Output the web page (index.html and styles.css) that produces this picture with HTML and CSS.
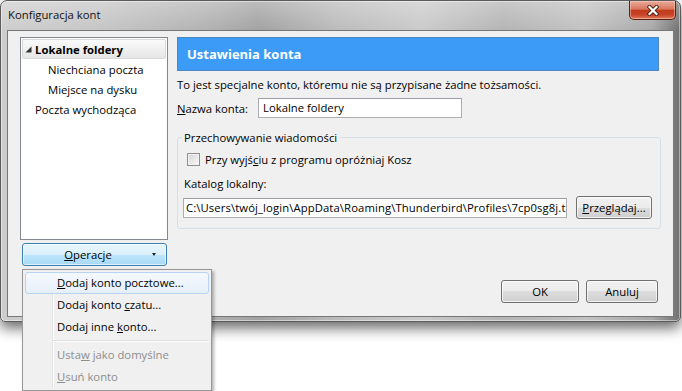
FILE: index.html
```html
<!DOCTYPE html>
<html lang="pl">
<head>
    <meta charset="UTF-8">
    <title>Konfiguracja kont</title>
    <link rel="stylesheet" href="styles.css">
</head>
<body>
    <div class="screen">
        <div class="window">
            <div class="titlebar">
                <span class="title">Konfiguracja kont</span>
                <div class="close-btn">
                    <svg width="12" height="11" viewBox="0 0 12 11">
                        <path d="M2.5 2 L9.5 9 M9.5 2 L2.5 9" stroke="#4a1b12" stroke-width="4" stroke-linecap="square"/>
                        <path d="M2.5 2 L9.5 9 M9.5 2 L2.5 9" stroke="#fff" stroke-width="2.2" stroke-linecap="square"/>
                    </svg>
                </div>
            </div>
            <div class="client">
                <div class="left-col">
                    <div class="tree">
                        <div class="tree-row selected">
                            <svg class="twisty" width="7" height="7" viewBox="0 0 7 7"><polygon points="6.5,0.5 6.5,6.5 0.5,6.5" fill="#333"/></svg>
                            <span>Lokalne foldery</span>
                        </div>
                        <div class="tree-row child">Niechciana poczta</div>
                        <div class="tree-row child">Miejsce na dysku</div>
                        <div class="tree-row top">Poczta wychodząca</div>
                    </div>
                    <button class="ops-btn">
                        <span class="ops-label"><u>O</u>peracje</span>
                        <span class="ops-arrow"></span>
                    </button>
                </div>
                <div class="right-col">
                    <div class="panel-head">Ustawienia konta</div>
                    <p class="note">To jest specjalne konto, któremu nie są przypisane żadne tożsamości.</p>
                    <div class="name-row">
                        <span class="name-label"><u>N</u>azwa konta:</span>
                        <div class="textbox name-box">Lokalne foldery</div>
                    </div>
                    <fieldset class="group">
                        <legend>Przechowywanie wiadomości</legend>
                        <div class="check-row">
                            <span class="checkbox"></span>
                            <span class="check-label">Przy wyjś<u>c</u>iu z programu opróżniaj Kosz</span>
                        </div>
                        <div class="dir-label">Katalog lokalny:</div>
                        <div class="dir-row">
                            <div class="textbox dir-box">C:\Users\twój_login\AppData\Roaming\Thunderbird\Profiles\7cp0sg8j.t</div>
                            <button class="btn browse-btn"><u>P</u>rzeglądaj...</button>
                        </div>
                    </fieldset>
                    <div class="actions">
                        <button class="btn ok-btn">OK</button>
                        <button class="btn cancel-btn">Anuluj</button>
                    </div>
                </div>
            </div>
        </div>

        <div class="menu">
            <div class="menu-item hover"><u>D</u>odaj konto pocztowe...</div>
            <div class="menu-item">Dodaj konto <u>c</u>zatu...</div>
            <div class="menu-item">Dodaj inne <u>k</u>onto...</div>
            <div class="menu-sep"></div>
            <div class="menu-item disabled">Usta<u>w</u> jako domyślne</div>
            <div class="menu-item disabled"><u>U</u>suń konto</div>
        </div>
    </div>
</body>
</html>
```

FILE: styles.css
```css
body {
    margin: 0;
    background: #fff;
    font-family: "Open Sans", "Noto Sans", sans-serif;
    font-size: 11.3px;
    color: #000;
}
.screen {
    position: relative;
    width: 682px;
    height: 391px;
    overflow: hidden;
}
.window {
    width: 681px;
    height: 322px;
    box-sizing: border-box;
    border: 1px solid #5b5b5b;
    border-radius: 7px 7px 5px 5px;
    display: flex;
    flex-direction: column;
    background:
        linear-gradient(rgba(255, 255, 255, 0.28), rgba(255, 255, 255, 0) 30px),
        linear-gradient(to right, #cdcdcd 0%, #c6c6c6 14%, #b2b2b2 30%, #a2a2a2 38%, #bcbcbc 50%, #cacaca 62%, #b4b4b4 74%, #c2c2c2 86%, #a8a8a8 96%, #6f6f6f 100%);
    box-shadow: inset 0 0 0 1px rgba(255, 255, 255, 0.45), 0 6px 14px rgba(0, 0, 0, 0.6);
}
.titlebar {
    height: 29px;
    display: flex;
    align-items: flex-start;
    flex-shrink: 0;
}
.title {
    padding: 6px 0 0 7px;
    line-height: 15px;
    color: #111;
}
.close-btn {
    margin-left: auto;
    margin-right: 4px;
    width: 47px;
    height: 19px;
    box-sizing: border-box;
    border: 1px solid #5a2116;
    border-top: none;
    border-radius: 0 0 5px 5px;
    background: linear-gradient(#e8ab9b 0%, #d8765e 45%, #c13a1c 52%, #c8452a 78%, #e07d5c 100%);
    box-shadow: inset 0 0 0 1px rgba(255, 210, 200, 0.5);
    display: flex;
    align-items: center;
    justify-content: center;
}
.client {
    flex: 1;
    margin: 0 6px 4px;
    border: 1px solid #777;
    background: #f0f0f0;
    display: flex;
    gap: 9px;
    padding: 6px 12px 13px;
}

/* left column */
.left-col {
    width: 148px;
    flex-shrink: 0;
    display: flex;
    flex-direction: column;
}
.tree {
    height: 203px;
    box-sizing: border-box;
    border: 1px solid #828790;
    background: #fff;
    padding: 1px;
}
.tree-row {
    height: 20px;
    box-sizing: border-box;
    border: 1px solid transparent;
    display: flex;
    align-items: center;
    white-space: nowrap;
}
.tree-row.selected {
    border-color: #d9d9d9;
    border-radius: 2px;
    background: linear-gradient(#fafafa, #e6e6e6);
    font-weight: 700;
    padding-left: 2px;
}
.twisty {
    margin-right: 3px;
    margin-top: 1px;
}
.tree-row.child {
    padding-left: 25px;
}
.tree-row.top {
    padding-left: 12px;
}
.ops-btn {
    margin: 3px 1px 0 2px;
    height: 23px;
    box-sizing: border-box;
    border: 1px solid #3c7fb1;
    border-radius: 3px;
    background: linear-gradient(#eaf6fd 0%, #d9f0fc 50%, #bee6fd 50%, #a7d9f5 100%);
    box-shadow: inset 0 0 0 1px rgba(255, 255, 255, 0.6);
    font: inherit;
    color: #000;
    padding: 0 10px 0 7px;
    display: flex;
    align-items: center;
}
.ops-label {
    flex: 1;
    text-align: center;
}
.ops-arrow {
    width: 0;
    height: 0;
    border-left: 2.5px solid transparent;
    border-right: 2.5px solid transparent;
    border-top: 3px solid #222;
    margin-left: 6px;
}

/* right column */
.right-col {
    flex: 1;
    display: flex;
    flex-direction: column;
    min-width: 0;
}
.panel-head {
    height: 34px;
    box-sizing: border-box;
    border: 1px solid #4f86c2;
    background: #3c9bf6;
    color: #fff;
    font-weight: 700;
    font-size: 13px;
    padding-left: 9px;
    display: flex;
    align-items: center;
    margin-right: 2px;
}
.note {
    margin: 6px 0 0;
    line-height: 15px;
}
.name-row {
    display: flex;
    align-items: center;
    margin-top: 6px;
}
.name-label {
    width: 81px;
}
.textbox {
    height: 20px;
    box-sizing: border-box;
    border: 1px solid #abadb3;
    border-top-color: #999ca4;
    background: #fff;
    padding-left: 4px;
    line-height: 18px;
    white-space: nowrap;
    overflow: hidden;
}
.name-box {
    width: 204px;
}
.group {
    margin: 12px 0 0;
    padding: 7px 7px 9px 6px;
    border: 1px solid #d5dfe5;
    border-radius: 3px;
    min-width: 0;
}
.group legend {
    padding: 0 3px 0 2px;
    margin-left: -2px;
    line-height: 15px;
}
.check-row {
    display: flex;
    align-items: center;
    height: 15px;
    margin-left: 3px;
}
.checkbox {
    width: 13px;
    height: 13px;
    box-sizing: border-box;
    border: 1px solid #8f8f8f;
    background: linear-gradient(135deg, #d6d6d6, #f8f8f8);
    box-shadow: inset 0 0 0 1px #f4f4f4;
}
.check-label {
    margin-left: 5px;
}
.dir-label {
    margin-top: 9px;
    line-height: 15px;
}
.dir-row {
    display: flex;
    align-items: center;
    margin-top: 5px;
}
.dir-box {
    width: 384px;
    margin-left: -1px;
    padding-left: 2px;
    letter-spacing: 0.1px;
}
.btn {
    height: 23px;
    box-sizing: border-box;
    border: 1px solid #707070;
    border-radius: 3px;
    background: linear-gradient(#f2f2f2 0%, #ebebeb 50%, #dddddd 50%, #cfcfcf 100%);
    box-shadow: inset 0 0 0 1px rgba(255, 255, 255, 0.7);
    font: inherit;
    color: #000;
    padding: 0;
}
.browse-btn {
    width: 76px;
    margin-left: 9px;
}
.actions {
    margin-top: auto;
    display: flex;
    justify-content: flex-end;
    gap: 7px;
    margin-right: 3px;
}
.ok-btn {
    width: 78px;
}
.cancel-btn {
    width: 72px;
}

/* dropdown menu of Operacje */
.menu {
    position: absolute;
    left: 22px;
    top: 269px;
    width: 190px;
    height: 122px;
    box-sizing: border-box;
    border: 1px solid #979797;
    background: #f0f0f0;
    padding: 2px;
    box-shadow: 2px 2px 3px rgba(0, 0, 0, 0.3);
}
.menu::before {
    content: "";
    position: absolute;
    left: 29px;
    top: 2px;
    bottom: 2px;
    width: 1px;
    background: #e2e3e3;
    border-right: 1px solid #fff;
}
.menu-item {
    position: relative;
    height: 22px;
    box-sizing: border-box;
    border: 1px solid transparent;
    border-radius: 3px;
    padding-left: 31px;
    line-height: 20px;
    white-space: nowrap;
}
.menu-item.hover {
    border-color: #b7d3f3;
    background: linear-gradient(#f5f9fe, #e6eff9);
}
.menu-item.disabled {
    color: #8d8d8d;
}
.menu-sep {
    height: 6px;
    margin-left: 27px;
    position: relative;
}
.menu-sep::after {
    content: "";
    position: absolute;
    left: 0;
    right: 0;
    top: 2px;
    height: 1px;
    background: #e0e0e0;
    border-bottom: 1px solid #fff;
}
```
